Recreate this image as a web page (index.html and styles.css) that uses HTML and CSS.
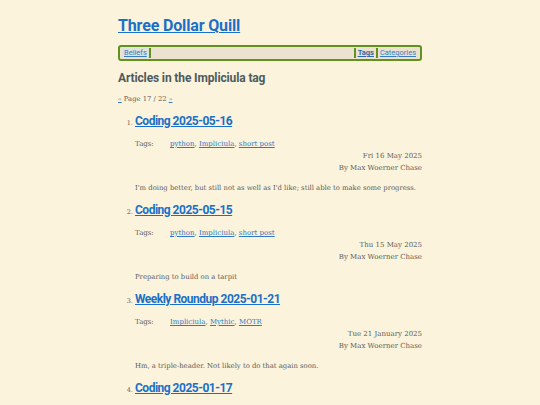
FILE: index.html
```html
<!DOCTYPE html>
<html lang="en">
<head>
<meta charset="utf-8">
<title>Three Dollar Quill</title>
<link rel="stylesheet" href="styles.css">
</head>
<body>
<div class="page">
  <header class="site-header">
    <h1 class="site-title"><a href="#">Three Dollar Quill</a></h1>
    <nav class="nav">
      <a href="#" class="nav-link nav-first">Beliefs</a>
      <span class="nav-spacer"></span>
      <a href="#" class="nav-link nav-current">Tags</a>
      <a href="#" class="nav-link">Categories</a>
    </nav>
  </header>
  <main>
    <h2 class="page-heading">Articles in the Impliciula tag</h2>
    <p class="pager"><a href="#">«</a> Page 17 / 22 <a href="#">»</a></p>
    <ol class="articles" start="1">
      <li class="article">
        <h3 class="article-title"><a href="#">Coding 2025-05-16</a></h3>
        <div class="tags"><span class="tags-label">Tags:</span><span class="tags-list"><a href="#">python</a>, <a href="#">Impliciula</a>, <a href="#">short post</a></span></div>
        <div class="meta"><div>Fri 16 May 2025</div><div>By Max Woerner Chase</div></div>
        <p class="summary">I'm doing better, but still not as well as I'd like; still able to make some progress.</p>
      </li>
      <li class="article">
        <h3 class="article-title"><a href="#">Coding 2025-05-15</a></h3>
        <div class="tags"><span class="tags-label">Tags:</span><span class="tags-list"><a href="#">python</a>, <a href="#">Impliciula</a>, <a href="#">short post</a></span></div>
        <div class="meta"><div>Thu 15 May 2025</div><div>By Max Woerner Chase</div></div>
        <p class="summary">Preparing to build on a tarpit</p>
      </li>
      <li class="article">
        <h3 class="article-title"><a href="#">Weekly Roundup 2025-01-21</a></h3>
        <div class="tags"><span class="tags-label">Tags:</span><span class="tags-list"><a href="#">Impliciula</a>, <a href="#">Mythic</a>, <a href="#">MOTR</a></span></div>
        <div class="meta"><div>Tue 21 January 2025</div><div>By Max Woerner Chase</div></div>
        <p class="summary">Hm, a triple-header. Not likely to do that again soon.</p>
      </li>
      <li class="article">
        <h3 class="article-title"><a href="#">Coding 2025-01-17</a></h3>
        <div class="tags"><span class="tags-label">Tags:</span><span class="tags-list"><a href="#">python</a>, <a href="#">Impliciula</a>, <a href="#">short post</a></span></div>
        <div class="meta"><div>Fri 17 January 2025</div><div>By Max Woerner Chase</div></div>
        <p class="summary">More work.</p>
      </li>
    </ol>
  </main>
</div>
</body>
</html>
```
FILE: styles.css
```css
html, body {
  margin: 0;
  padding: 0;
  background: #fbf3dc;
}
body {
  font-family: "DejaVu Serif", serif;
  font-size: 7px;
  color: #5c5c5a;
}
a { color: #2f78c2; }
.page {
  width: 304px;
  margin: 0 auto;
  padding-top: 14px;
}
.site-title {
  margin: 0;
  font-family: Roboto, sans-serif;
  font-weight: 700;
  font-size: 16px;
  letter-spacing: -0.15px;
  line-height: 24px;
}
.site-title a { color: #1a70c8; }
.nav {
  margin-top: 7px;
  display: flex;
  align-items: center;
  border: 2px solid #62911f;
  border-radius: 3px;
  background: #ebe3cf;
  height: 12px;
  padding: 0 2px;
  font-family: Roboto, sans-serif;
  font-size: 7.5px;
}
.nav-link {
  color: #3a7cc0;
  padding: 0 2px;
  line-height: 10px;
}
.nav-first {
  border-right: 2px solid #62911f;
  background: #dfe3dc;
}
.nav-spacer { flex: 1; }
.nav-current { border-left: 2px solid #62911f; border-right: 2px solid #62911f; font-weight: 700; color: #2b6aa8; }
.page-heading {
  margin: 9px 0 0;
  font-family: Roboto, sans-serif;
  font-weight: 700;
  font-size: 12px;
  letter-spacing: -0.13px;
  line-height: 16px;
  color: #4d5b60;
}
.pager {
  margin: 8px 0 0;
  line-height: 10px;
  font-size: 6.8px;
}
.pager a { font-size: 6px; }
.articles {
  margin: 7px 0 0;
  padding-left: 17px;
}
.article { font-size: 6.5px; }
.article-title {
  margin: 0;
  font-family: Roboto, sans-serif;
  font-weight: 700;
  font-size: 12px;
  letter-spacing: -0.5px;
  line-height: 20px;
}
.article-title a { color: #1a70c8; }
.tags {
  display: flex;
  margin-top: 7px;
  line-height: 12px;
  font-size: 7px;
}
.tags-label { width: 35px; }
.meta {
  text-align: right;
  font-size: 7px;
  line-height: 12px;
}
.summary {
  margin: 8px 0 6px;
  font-size: 6.85px;
  line-height: 12px;
}
```
